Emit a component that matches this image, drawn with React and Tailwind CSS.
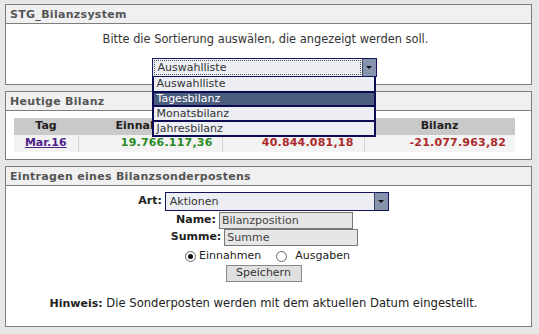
import React from "react";

function Panel({ title, children, bodyClass }) {
  return (
    <div className="border border-[#7d7d7d] bg-white">
      <div className="h-[19px] border-b border-[#7d7d7d] bg-[#f0f0f0] px-[4px] font-bold leading-[19px] tracking-[0.3px] text-[#555]">
        {title}
      </div>
      <div className={bodyClass}>{children}</div>
    </div>
  );
}

function Arrow() {
  return (
    <div className="flex h-[17px] w-[14px] items-center justify-center border-l border-[#3a4566] bg-[#8693ad]">
      <div className="h-0 w-0 border-x-[3px] border-t-[3px] border-x-transparent border-t-[#111]" />
    </div>
  );
}

function Radio({ checked }) {
  return (
    <span className="inline-flex h-[11px] w-[11px] items-center justify-center rounded-full border border-[#666] bg-white">
      {checked && <span className="h-[5px] w-[5px] rounded-full bg-[#111]" />}
    </span>
  );
}

export default function App() {
  return (
    <div className="min-h-[334px] bg-[#e7e7e7] px-[5px] pt-[4px] font-['DejaVu_Sans',sans-serif] text-[11px] text-[#222]">
      <div className="w-[527px]">
        <Panel title="STG_Bilanzsystem" bodyClass="h-[60px] pt-[8px]">
          <div className="pr-[6px] text-center text-[11.4px] leading-[14px] text-[#333]">
            Bitte die Sortierung auswälen, die angezeigt werden soll.
          </div>
          <div className="mt-[12px] flex justify-center pr-[9px]">
            <div className="relative z-10 w-[225px]">
              <div className="flex h-[19px] border border-[#14145a] bg-[#eceef3]">
                <div className="m-[1px] flex-1 border border-dotted border-[#555] pl-[3px] leading-[13px] text-[#333]">
                  Auswahlliste
                </div>
                <Arrow />
              </div>
              <div className="absolute left-0 top-[19px] w-[224px] border-x-2 border-b-2 border-[#0c0c55] bg-[#eceef3] text-[#333]">
                <div className="h-[14px] pl-[3px] leading-[14px]">Auswahlliste</div>
                <div className="box-content h-[12px] border-y-2 border-[#0c0c55] bg-[#4b5c7c] pl-[3px] leading-[12px] text-white">
                  Tagesbilanz
                </div>
                <div className="h-[13px] pl-[3px] leading-[13px]">Monatsbilanz</div>
                <div className="box-content h-[13px] border-t-2 border-[#0c0c55] pl-[3px] leading-[13px]">
                  Jahresbilanz
                </div>
              </div>
            </div>
          </div>
        </Panel>

        <div className="mt-[6px]">
          <Panel title="Heutige Bilanz" bodyClass="h-[48px] pl-[8px] pt-[7px]">
            <table className="w-[501px] border-collapse text-[11px] font-bold">
              <thead>
                <tr className="h-[17px] bg-[#c9c9c9] text-[#222]">
                  <th className="w-[64px] text-center font-bold">Tag</th>
                  <th className="w-[144px] text-center font-bold">Einnahmen</th>
                  <th className="w-[142px] text-center font-bold">Ausgaben</th>
                  <th className="text-center font-bold">Bilanz</th>
                </tr>
              </thead>
              <tbody>
                <tr className="h-[17px] bg-[#f3f3f3]">
                  <td className="border-r border-[#d4d4d4] text-center">
                    <span className="text-[#4f1f8a] underline">Mar.16</span>
                  </td>
                  <td className="border-r border-[#d4d4d4] pr-[9px] text-right tracking-[0.2px] text-[#2a8a23]">19.766.117,36</td>
                  <td className="border-r border-[#d4d4d4] pr-[10px] text-right tracking-[0.2px] text-[#a92a2a]">40.844.081,18</td>
                  <td className="pr-[9px] text-right tracking-[0.2px] text-[#a92a2a]">-21.077.963,82</td>
                </tr>
              </tbody>
            </table>
          </Panel>
        </div>

        <div className="mt-[6px]">
          <Panel title="Eintragen eines Bilanzsonderpostens" bodyClass="h-[140px] pt-[6px] pr-[10px]">
            <div className="flex flex-col items-center">
              <div className="flex h-[19px] items-center">
                <span className="mr-[3px] font-bold">Art:</span>
                <div className="flex h-[19px] w-[224px] border border-[#14145a] bg-[#eceef3]">
                  <div className="flex-1 pl-[4px] leading-[17px] text-[#333]">Aktionen</div>
                  <Arrow />
                </div>
              </div>
              <div className="mt-[1px] flex h-[17px] items-center pl-[2px]">
                <span className="mr-[3px] font-bold">Name:</span>
                <div className="h-[17px] w-[134px] border border-[#777] bg-[#e6e6e6] pl-[2px] leading-[15px] text-[#444]">
                  Bilanzposition
                </div>
              </div>
              <div className="flex h-[17px] items-center pl-[2px]">
                <span className="mr-[3px] font-bold">Summe:</span>
                <div className="h-[17px] w-[134px] border border-[#777] bg-[#e6e6e6] pl-[2px] leading-[15px] text-[#444]">
                  Summe
                </div>
              </div>
              <div className="mt-[3px] flex h-[15px] items-center pl-[8px]">
                <Radio checked />
                <span className="ml-[3px] mr-[15px]">Einnahmen</span>
                <Radio />
                <span className="ml-[8px]">Ausgaben</span>
              </div>
              <div className="mt-[1px] flex h-[17px] w-[76px] items-center justify-center border border-[#888] bg-[#e0e0e0] text-[#333]">
                Speichern
              </div>
              <div className="mt-[13px] text-[11.6px]">
                <span className="text-[11px] font-bold">Hinweis:</span> Die Sonderposten werden mit dem aktuellen Datum eingestellt.
              </div>
            </div>
          </Panel>
        </div>
      </div>
    </div>
  );
}
